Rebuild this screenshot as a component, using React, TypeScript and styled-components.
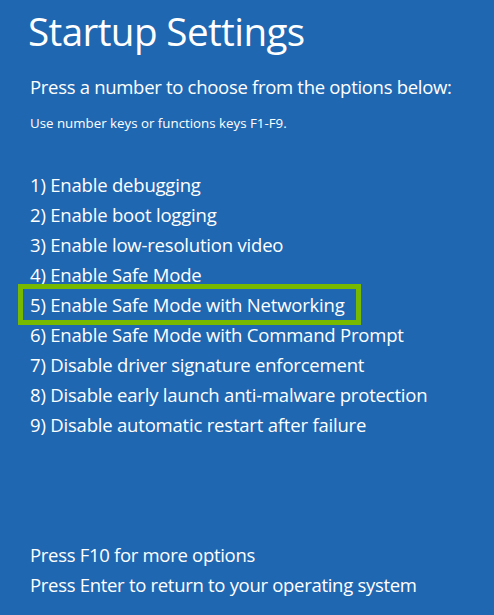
import React from 'react'
import styled, { createGlobalStyle } from 'styled-components'

const GlobalStyle = createGlobalStyle`
  html, body {
    margin: 0;
    padding: 0;
    background: #2067b2;
  }
  body {
    font-family: "Open Sans", "Noto Sans", sans-serif;
    color: #ffffff;
  }
`

const Screen = styled.div`
  width: 494px;
  height: 615px;
  box-sizing: border-box;
  background: #2067b2;
  padding: 4px 0 0 30px;
  display: flex;
  flex-direction: column;
  overflow: hidden;
`

const Title = styled.h1`
  margin: 0 0 0 -2px;
  font-size: 38.6px;
  font-weight: 400;
  line-height: 54px;
  letter-spacing: -0.6px;
`

const Prompt = styled.p`
  margin: 16px 0 0;
  font-size: 18.5px;
  line-height: 26px;
  letter-spacing: -0.3px;
`

const Hint = styled.p`
  margin: 14px 0 0;
  font-size: 13.3px;
  line-height: 18px;
  letter-spacing: 0;
`

const OptionList = styled.ol`
  list-style: none;
  margin: 38px 0 0;
  padding: 0;
  display: flex;
  flex-direction: column;
`

const Option = styled.li<{ $selected?: boolean }>`
  position: relative;
  font-size: 18.5px;
  line-height: 30px;
  letter-spacing: -0.2px;
  white-space: nowrap;

  ${(p) =>
    p.$selected &&
    `
    &::before {
      content: '';
      position: absolute;
      left: -12px;
      top: -6px;
      width: 343px;
      height: 41px;
      box-sizing: border-box;
      border: 5px solid #76b900;
    }
  `}
`

const Footer = styled.div`
  margin-top: auto;
  margin-bottom: 15px;
  display: flex;
  flex-direction: column;
`

const FooterLine = styled.div`
  font-size: 18.5px;
  line-height: 30px;
  letter-spacing: -0.3px;
`

const options = [
  'Enable debugging',
  'Enable boot logging',
  'Enable low-resolution video',
  'Enable Safe Mode',
  'Enable Safe Mode with Networking',
  'Enable Safe Mode with Command Prompt',
  'Disable driver signature enforcement',
  'Disable early launch anti-malware protection',
  'Disable automatic restart after failure',
]

const App = () => {
  return (
    <>
      <GlobalStyle />
      <Screen>
        <Title>Startup Settings</Title>
        <Prompt>Press a number to choose from the options below:</Prompt>
        <Hint>Use number keys or functions keys F1-F9.</Hint>
        <OptionList>
          {options.map((label, i) => (
            <Option key={label} $selected={i === 4}>
              {i + 1}) {label}
            </Option>
          ))}
        </OptionList>
        <Footer>
          <FooterLine>Press F10 for more options</FooterLine>
          <FooterLine>Press Enter to return to your operating system</FooterLine>
        </Footer>
      </Screen>
    </>
  )
}

export default App
